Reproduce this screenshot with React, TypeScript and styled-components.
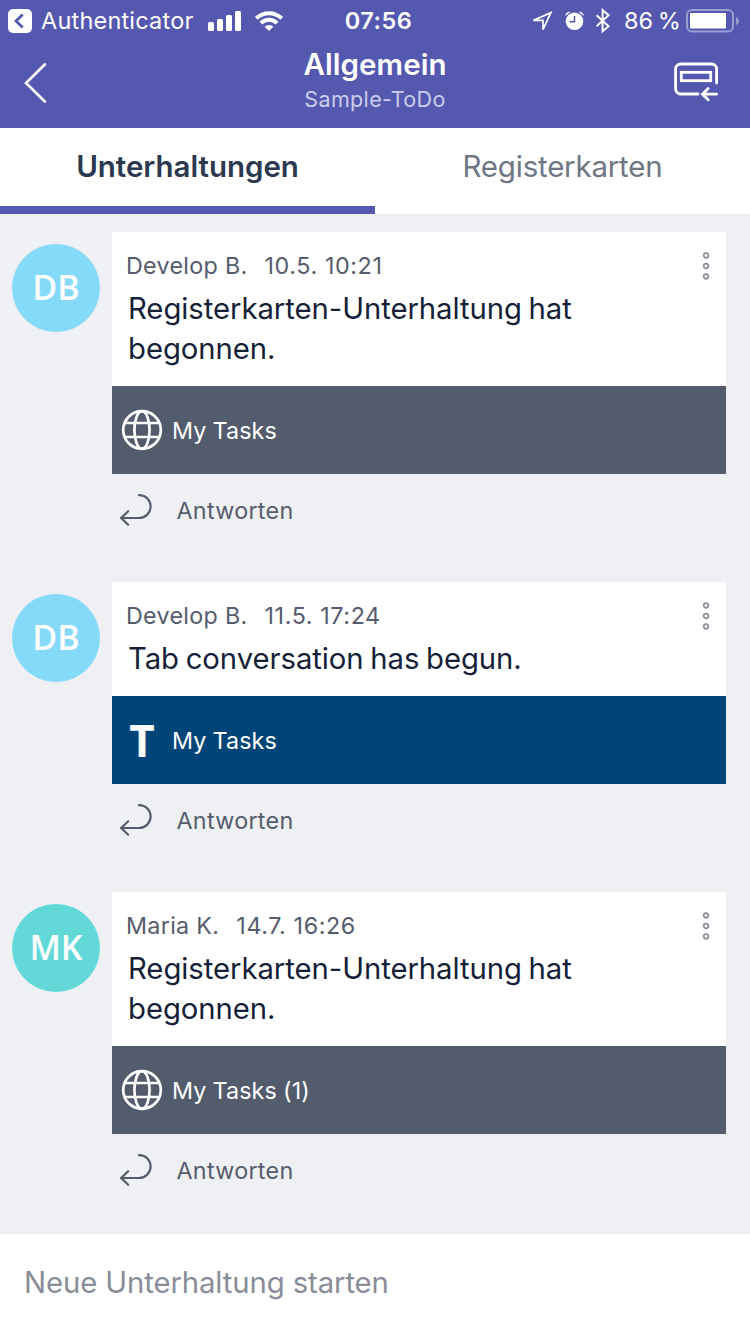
import React from "react";
import styled, { createGlobalStyle } from "styled-components";

const GlobalStyle = createGlobalStyle`
  * { box-sizing: border-box; }
  body {
    margin: 0;
    background: #eff0f4;
    font-family: Inter, "Liberation Sans", sans-serif;
    -webkit-font-smoothing: antialiased;
  }
`;

const Screen = styled.div`
  width: 750px;
  height: 1334px;
  display: flex;
  flex-direction: column;
  background: #eff0f4;
  overflow: hidden;
`;

const Header = styled.header`
  height: 128px;
  background: #5558af;
  color: #fff;
  flex: none;
`;

const StatusBar = styled.div`
  display: grid;
  grid-template-columns: 1fr auto 1fr;
  align-items: center;
  height: 40px;
  padding: 1px 11px 0 8px;
`;

const StatusGroup = styled.div<{ $end?: boolean }>`
  display: flex;
  align-items: center;
  justify-content: ${(p) => (p.$end ? "flex-end" : "flex-start")};

  svg { display: block; flex: none; }
`;

const StatusText = styled.span<{ $weight?: number; $track?: number }>`
  font-size: 23.5px;
  line-height: 38px;
  white-space: nowrap;
  font-weight: ${(p) => p.$weight ?? 400};
  letter-spacing: ${(p) => p.$track ?? 0}px;
`;

const Clock = styled(StatusText)`
  padding-left: 10px;
`;

const AppName = styled(StatusText)`
  width: 153px;
  margin: 0 14px 0 9px;
`;

const BatteryText = styled(StatusText)`
  width: 57px;
  margin: 0 5px 0 14px;
  word-spacing: -2px;
`;

const NavBar = styled.div`
  display: grid;
  grid-template-columns: 100px 1fr 100px;
  height: 88px;

  > svg { display: block; }
`;

const Titles = styled.div`
  display: flex;
  flex-direction: column;
  align-items: center;
  padding-top: 4px;
`;

const Title = styled.h1`
  margin: 0;
  font-size: 29.5px;
  line-height: 40px;
  font-weight: 600;
  letter-spacing: 0.05px;
`;

const Subtitle = styled.div`
  font-size: 21.5px;
  line-height: 30px;
  letter-spacing: 0.35px;
  color: #cccdea;
`;

const Tabs = styled.nav`
  display: flex;
  height: 86px;
  background: #fff;
  flex: none;
`;

const Tab = styled.div<{ $active?: boolean }>`
  flex: 1;
  text-align: center;
  font-size: 29.5px;
  line-height: 76px;
  padding-bottom: 2px;
  font-weight: ${(p) => (p.$active ? 600 : 400)};
  letter-spacing: ${(p) => (p.$active ? -0.03 : -0.22)}px;
  color: ${(p) => (p.$active ? "#2b3850" : "#6e7684")};
  border-bottom: 8px solid ${(p) => (p.$active ? "#5558af" : "#fff")};
`;

const Feed = styled.main`
  flex: 1;
  display: flex;
  flex-direction: column;
  gap: 34px;
  padding: 18px 24px 0 12px;
`;

const PostRow = styled.article`
  display: flex;
  gap: 12px;
  align-items: flex-start;
`;

const Avatar = styled.div<{ $color: string }>`
  width: 88px;
  height: 88px;
  margin-top: 12px;
  flex: none;
  border-radius: 50%;
  background: ${(p) => p.$color};
  color: #fff;
  text-align: center;
  font: 600 34px/86px "Open Sans", sans-serif;
`;

const PostColumn = styled.div`
  flex: 1;
`;

const PostBody = styled.div`
  display: flex;
  justify-content: space-between;
  background: #fff;
  padding: 18px 15px 17px 14px;

  > svg { display: block; flex: none; }
`;

const Meta = styled.div`
  display: flex;
  gap: 17px;
  font-size: 23.3px;
  line-height: 32px;
  height: 39px;
  letter-spacing: 0.3px;
  color: #555c6d;
`;

const PostDate = styled.span`
  letter-spacing: 0.6px;
`;

const Message = styled.p`
  margin: 0 0 0 2px;
  width: 500px;
  font-size: 29.3px;
  line-height: 40px;
  letter-spacing: -0.06px;
  word-spacing: -1.5px;
  color: #151f38;
`;

const TabCard = styled.div<{ $color: string }>`
  display: flex;
  align-items: center;
  height: 88px;
  padding-left: 8px;
  background: ${(p) => p.$color};
  color: #fff;
  font-size: 23.3px;
  letter-spacing: 0.1px;
  word-spacing: -0.5px;

  svg { display: block; }
`;

const CardIcon = styled.div`
  width: 44px;
  margin-right: 8px;
  text-align: center;
  font: 700 44px/86px "Open Sans", sans-serif;
`;

const Reply = styled.div`
  display: flex;
  align-items: center;
  height: 74px;
  padding: 0 0 2px 7px;
  gap: 22.5px;
  font-size: 23.3px;
  letter-spacing: 0.3px;
  color: #555c6d;

  svg { display: block; }
`;

const Composer = styled.footer`
  height: 100px;
  flex: none;
  padding-left: 24px;
  background: #fff;
  color: #888d98;
  font-size: 29.3px;
  line-height: 98px;
  letter-spacing: -0.1px;
`;

const ReturnToApp = () => (
  <svg width="24" height="24" viewBox="0 0 24 24">
    <rect width="24" height="24" rx="5" fill="#fff" />
    <path d="M14.7 5.5 8 12l6.7 6.5" fill="none" stroke="#5558af" strokeWidth="2.8" />
  </svg>
);

const Signal = () => (
  <svg width="34" height="20" viewBox="0 0 34 20" fill="#fff">
    <rect x="0" y="11" width="6" height="9" rx="1.5" />
    <rect x="9" y="8" width="6" height="12" rx="1.5" />
    <rect x="18" y="4" width="6" height="16" rx="1.5" />
    <rect x="27" y="0" width="6" height="20" rx="1.5" />
  </svg>
);

const WifiIcon = styled.svg`
  margin-left: 13px;
`;

const Wifi = () => (
  <WifiIcon width="28" height="20" viewBox="0 0 28 20">
    <g fill="none" stroke="#fff" strokeWidth="4">
      <path d="M1.300 7.400a18.100 18.100 0 0 1 25.400 0" />
      <path d="M5.900 12.200a11.500 11.500 0 0 1 16.200 0" />
    </g>
    <path d="M14 20l-4.400-4.300a6.300 6.300 0 0 1 8.800 0z" fill="#fff" />
  </WifiIcon>
);

const StatusIcons = () => (
  <svg width="78" height="26" viewBox="0 0 78 26">
    <path d="M1.400 12.400 18.800 4.600 11 21.600V12.400z" fill="none" stroke="#fff" strokeWidth="1.700" />
    <g transform="translate(42.500 13.200)">
      <circle r="8.800" fill="#fff" />
      <path d="M-9.200-5.200A4 4 0 0 1-4.200-9.300zM9.200-5.200A4 4 0 0 0 4.200-9.300z" fill="#fff" />
      <path d="M0-5.300V.6H-5" fill="none" stroke="#5558af" strokeWidth="1.500" />
    </g>
    <path d="M64.600 7.200 76.600 18.200 70.600 23.400V2l6 5.200L64.600 18.200" fill="none" stroke="#fff" strokeWidth="2" />
  </svg>
);

const Battery = () => (
  <svg width="53" height="24" viewBox="0 0 53 24">
    <rect x="1" y="1" width="46" height="21.500" rx="5" fill="none" stroke="#9a9cd2" strokeWidth="2" />
    <rect x="4" y="4" width="36" height="15.500" rx="1" fill="#fff" />
    <path d="M50 8v8c4-1.400 4-6.600 0-8z" fill="#9a9cd2" />
  </svg>
);

const BackChevron = () => (
  <svg width="100" height="88" viewBox="0 40 100 88">
    <path d="M45 64.300 26 83l19 18.700" fill="none" stroke="#fff" strokeWidth="2.600" strokeLinecap="round" />
  </svg>
);

const ChannelInfo = () => (
  <svg width="100" height="88" viewBox="650 40 100 88" fill="none" stroke="#fff" strokeWidth="2.800">
    <path d="M716.600 83V69a5 5 0 0 0-5-5H680.600a5 5 0 0 0-5 5v20a5 5 0 0 0 5 5H698" strokeLinecap="round" />
    <rect x="681.300" y="72.300" width="29.400" height="8.400" />
    <path d="M716.600 94.200H703M708.200 88.600 702.400 94.200l5.800 5.600" strokeLinecap="round" />
  </svg>
);

const MoreDots = () => (
  <svg width="10" height="32" viewBox="0 0 10 32" fill="none" stroke="#8b8e99" strokeWidth="1.700">
    <circle cx="5" cy="5.500" r="2.300" />
    <circle cx="5" cy="16" r="2.300" />
    <circle cx="5" cy="26.500" r="2.300" />
  </svg>
);

const Globe = () => (
  <svg width="44" height="44" viewBox="-22 -22 44 44" fill="none" stroke="#fff" strokeWidth="2.700">
    <circle r="18.800" />
    <ellipse rx="7.600" ry="18.800" />
    <path d="M-17.400-7H17.400M-17.400 7H17.400" />
  </svg>
);

const ReplyArrow = () => (
  <svg width="35" height="34" viewBox="0 0 35 34" fill="none" stroke="#555c6d" strokeWidth="2.200" strokeLinecap="round">
    <path d="M20 2.200C27 2.200 31.600 7.400 31.600 13.600S26.600 25 20 25H2.200" />
    <path d="M9.200 18.200 2.200 25l7 6.800" />
  </svg>
);

interface Post {
  initials: string;
  avatar: string;
  author: string;
  date: string;
  text: string;
  card: string;
  color: string;
  letter?: string;
}

const posts: Post[] = [
  {
    initials: "DB", avatar: "#85d9f9", author: "Develop B.", date: "10.5. 10:21",
    text: "Registerkarten-Unterhaltung hat begonnen.", card: "My Tasks", color: "#535c6d",
  },
  {
    initials: "DB", avatar: "#85d9f9", author: "Develop B.", date: "11.5. 17:24",
    text: "Tab conversation has begun.", card: "My Tasks", color: "#004578", letter: "T",
  },
  {
    initials: "MK", avatar: "#63d8d8", author: "Maria K.", date: "14.7. 16:26",
    text: "Registerkarten-Unterhaltung hat begonnen.", card: "My Tasks (1)", color: "#535c6d",
  },
];

const PostItem = ({ post }: { post: Post }) => (
  <PostRow>
    <Avatar $color={post.avatar}>{post.initials}</Avatar>
    <PostColumn>
      <PostBody>
        <div>
          <Meta>
            <span>{post.author}</span>
            <PostDate>{post.date}</PostDate>
          </Meta>
          <Message>{post.text}</Message>
        </div>
        <MoreDots />
      </PostBody>
      <TabCard $color={post.color}>
        <CardIcon>{post.letter ?? <Globe />}</CardIcon>
        {post.card}
      </TabCard>
      <Reply>
        <ReplyArrow />
        Antworten
      </Reply>
    </PostColumn>
  </PostRow>
);

export default function App() {
  return (
    <Screen>
      <GlobalStyle />
      <Header>
        <StatusBar>
          <StatusGroup>
            <ReturnToApp />
            <AppName $track={0.2}>Authenticator</AppName>
            <Signal />
            <Wifi />
          </StatusGroup>
          <Clock $weight={600} $track={0.5}>07:56</Clock>
          <StatusGroup $end>
            <StatusIcons />
            <BatteryText>86 %</BatteryText>
            <Battery />
          </StatusGroup>
        </StatusBar>
        <NavBar>
          <BackChevron />
          <Titles>
            <Title>Allgemein</Title>
            <Subtitle>Sample-ToDo</Subtitle>
          </Titles>
          <ChannelInfo />
        </NavBar>
      </Header>
      <Tabs>
        <Tab $active>Unterhaltungen</Tab>
        <Tab>Registerkarten</Tab>
      </Tabs>
      <Feed>
        {posts.map((post) => (
          <PostItem key={post.date} post={post} />
        ))}
      </Feed>
      <Composer>Neue Unterhaltung starten</Composer>
    </Screen>
  );
}
